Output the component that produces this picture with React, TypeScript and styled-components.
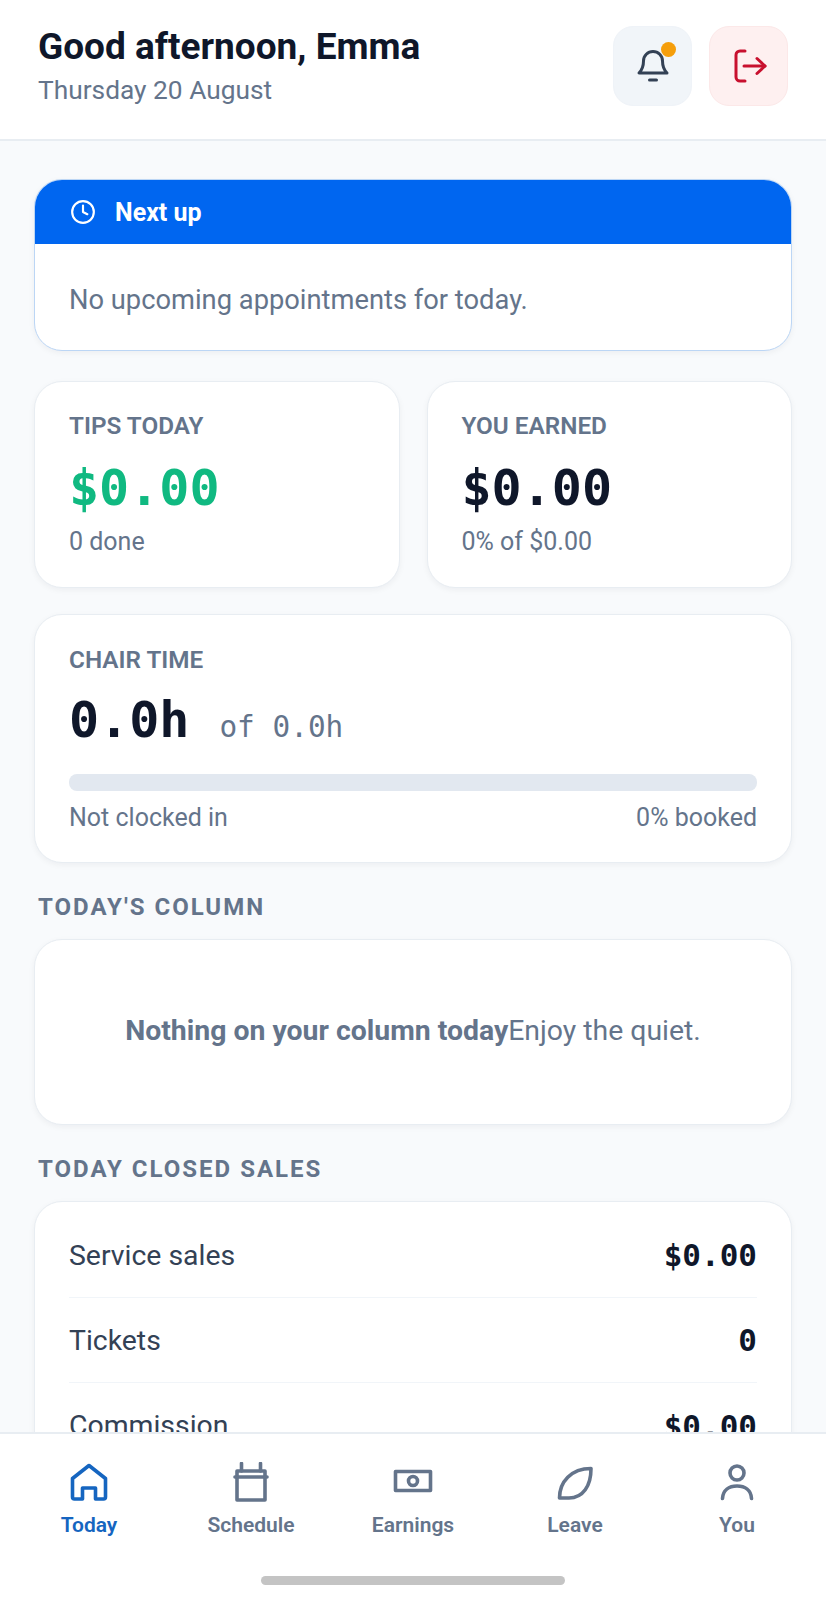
import React from 'react'
import styled, { createGlobalStyle } from 'styled-components'
import { Clock } from 'lucide-react'

const mono = `"DejaVu Sans Mono", "Liberation Mono", monospace`

const Global = createGlobalStyle`
  * { box-sizing: border-box; }
  html, body { margin: 0; padding: 0; }
  body { background: #f8fafc; font-family: Roboto, "Liberation Sans", sans-serif; }
`

const App = () => {
  return (
    <Screen>
      <Global />
      <Header>
        <div>
          <Title>Good afternoon, Emma</Title>
          <DateLine>Thursday 20 August</DateLine>
        </div>
        <HeadActions>
          <IconBtn>
            <HeadIcon viewBox="0 0 36 36" stroke="#334155">
              <path d="M4 25H32C29 22 27.5 19 27.5 13A9.5 9.5 0 0 0 8.5 13C8.5 19 7 22 4 25Z" />
              <path d="M14.5 32H21.5" />
            </HeadIcon>
            <Dot />
          </IconBtn>
          <IconBtn $danger>
            <HeadIcon viewBox="0 0 36 36" stroke="#c8102e">
              <path d="M14 3H9a4 4 0 0 0-4 4v22a4 4 0 0 0 4 4h5" />
              <path d="M13 18H34" />
              <path d="M26 10.5l8 7.5-8 7.5" />
            </HeadIcon>
          </IconBtn>
        </HeadActions>
      </Header>

      <Content>
        <NextCard>
          <NextHead>
            <Clock size={26} color="#fff" strokeWidth={2} />
            <span>Next up</span>
          </NextHead>
          <NextBody>No upcoming appointments for today.</NextBody>
        </NextCard>

        <TwoCols>
          <StatCard>
            <Label>TIPS TODAY</Label>
            <Money $green>$0.00</Money>
            <Small>0 done</Small>
          </StatCard>
          <StatCard>
            <Label>YOU EARNED</Label>
            <Money>$0.00</Money>
            <Small>0% of $0.00</Small>
          </StatCard>
        </TwoCols>

        <ChairCard>
          <Label>CHAIR TIME</Label>
          <HoursRow>
            <Hours>0.0h</Hours>
            <HoursOf>of 0.0h</HoursOf>
          </HoursRow>
          <Track />
          <TrackFoot>
            <span>Not clocked in</span>
            <span>0% booked</span>
          </TrackFoot>
        </ChairCard>

        <SectionTitle>TODAY'S COLUMN</SectionTitle>
        <EmptyCard>
          <strong>Nothing on your column today</strong>Enjoy the quiet.
        </EmptyCard>

        <SectionTitle>TODAY CLOSED SALES</SectionTitle>
        <SalesCard>
          <SalesRow><span>Service sales</span><SalesValue>$0.00</SalesValue></SalesRow>
          <SalesRow><span>Tickets</span><SalesValue>0</SalesValue></SalesRow>
          <SalesRow><span>Commission</span><SalesValue>$0.00</SalesValue></SalesRow>
        </SalesCard>
      </Content>

      <BottomNav>
        <NavItems>
          <NavItem $active>
            <NavIcon viewBox="0 0 40 40">
              <path d="M20 3.5L3.5 16.5V35a2 2 0 0 0 2 2H13.5V26H26.5V37H34.5a2 2 0 0 0 2-2V16.5Z" />
            </NavIcon>
            <span>Today</span>
          </NavItem>
          <NavItem>
            <NavIcon viewBox="0 0 40 40">
              <path d="M6 9H34V38H6Z" />
              <path d="M4 15H36" />
              <path d="M10.5 1.5V9M29.5 1.5V9" />
            </NavIcon>
            <span>Schedule</span>
          </NavItem>
          <NavItem>
            <NavIcon viewBox="0 0 40 40">
              <path d="M2.5 9.5H37.5V28.5H2.5Z" />
              <circle cx="20" cy="19" r="4.5" />
            </NavIcon>
            <span>Earnings</span>
          </NavItem>
          <NavItem>
            <NavIcon viewBox="0 0 40 40">
              <path d="M36 6.5C36 24 28 36 14 36H4.5C4.5 20 16 6.5 36 6.5Z" />
            </NavIcon>
            <span>Leave</span>
          </NavItem>
          <NavItem>
            <NavIcon viewBox="0 0 40 40">
              <circle cx="20" cy="11" r="7" />
              <path d="M5.5 36.5C6 28 12 24 20 24S34 28 34.5 36.5" />
            </NavIcon>
            <span>You</span>
          </NavItem>
        </NavItems>
        <HomeBar />
      </BottomNav>
    </Screen>
  )
}

export default App

const Screen = styled.div`
  width: 826px;
  height: 1600px;
  overflow: hidden;
  display: flex;
  flex-direction: column;
  background: #f8fafc;
`

const Header = styled.div`
  height: 141px;
  flex-shrink: 0;
  background: #fff;
  border-bottom: 2px solid #e8edf2;
  padding: 26px 38px 0 38px;
  display: flex;
  justify-content: space-between;
  align-items: flex-start;
`

const Title = styled.div`
  font-size: 37px;
  line-height: 42px;
  font-weight: 700;
  color: #0f172a;
`

const DateLine = styled.div`
  font-size: 26.3px;
  line-height: 32px;
  color: #64748b;
  margin-top: 6px;
`

const HeadActions = styled.div`
  display: flex;
  gap: 17px;
`

const IconBtn = styled.div<{ $danger?: boolean }>`
  position: relative;
  width: 79px;
  height: 80px;
  border-radius: 20px;
  display: flex;
  align-items: center;
  justify-content: center;
  background: ${p => (p.$danger ? '#fef0f0' : '#f1f5f9')};
  border: 1px solid ${p => (p.$danger ? '#fce8e8' : '#eff3f8')};
`

const HeadIcon = styled.svg`
  width: 36px;
  height: 36px;
  fill: none;
  stroke-width: 3;
  stroke-linecap: round;
  stroke-linejoin: round;
`

const Dot = styled.div`
  position: absolute;
  top: 15px;
  right: 15px;
  width: 15px;
  height: 15px;
  border-radius: 50%;
  background: #f59e0b;
`

const Content = styled.div`
  flex: 1;
  min-height: 0;
  overflow: hidden;
  padding: 38px 34px 0;
`

const Card = styled.div`
  background: #fff;
  border: 1px solid #e8edf2;
  border-radius: 28px;
  box-shadow: 0 2px 6px rgba(15, 23, 42, 0.05);
`

const NextCard = styled(Card)`
  height: 172px;
  overflow: hidden;
  border-color: #bcd6f5;
`

const NextHead = styled.div`
  height: 64px;
  background: #0066f0;
  color: #fff;
  display: flex;
  align-items: center;
  gap: 19px;
  padding-left: 35px;
  font-size: 25px;
  font-weight: 700;
`

const NextBody = styled.div`
  padding: 40px 0 0 34px;
  font-size: 27.3px;
  line-height: 32px;
  color: #64748b;
`

const TwoCols = styled.div`
  display: grid;
  grid-template-columns: 1fr 1fr;
  gap: 27px;
  margin-top: 30px;
`

const StatCard = styled(Card)`
  height: 207px;
  padding: 30px 34px 0;
`

const Label = styled.div`
  font-size: 24.3px;
  line-height: 28px;
  font-weight: 600;
  color: #64748b;
`

const Money = styled.div<{ $green?: boolean }>`
  font-family: ${mono};
  font-size: 50px;
  line-height: 60px;
  font-weight: 700;
  margin-top: 18px;
  color: ${p => (p.$green ? '#10b981' : '#0f172a')};
`

const Small = styled.div`
  font-size: 25px;
  line-height: 30px;
  color: #64748b;
  margin-top: 9px;
`

const ChairCard = styled(Card)`
  height: 249px;
  margin-top: 26px;
  padding: 31px 34px 0;
`

const HoursRow = styled.div`
  display: flex;
  align-items: baseline;
  gap: 30px;
  margin-top: 16px;
`

const Hours = styled.div`
  font-family: ${mono};
  font-size: 50px;
  line-height: 60px;
  font-weight: 700;
  color: #0f172a;
`

const HoursOf = styled.div`
  font-family: ${mono};
  font-size: 29.4px;
  color: #64748b;
`

const Track = styled.div`
  height: 17px;
  border-radius: 8px;
  background: #e2e8f0;
  margin-top: 24px;
`

const TrackFoot = styled.div`
  display: flex;
  justify-content: space-between;
  font-size: 25px;
  line-height: 30px;
  color: #64748b;
  margin-top: 12px;
`

const SectionTitle = styled.div`
  font-size: 24px;
  line-height: 28px;
  font-weight: 700;
  letter-spacing: 2px;
  color: #64748b;
  padding-left: 4px;
  margin-top: 30px;
`

const EmptyCard = styled(Card)`
  height: 186px;
  margin-top: 18px;
  padding-bottom: 3px;
  display: flex;
  align-items: center;
  justify-content: center;
  font-size: 28.4px;
  color: #64748b;

  strong {
    font-weight: 700;
  }
`

const SalesCard = styled(Card)`
  margin-top: 18px;
  padding: 11px 34px 0;
  height: 400px;
`

const SalesRow = styled.div`
  height: 85px;
  display: flex;
  align-items: center;
  justify-content: space-between;
  font-size: 28.4px;
  color: #334155;
  border-bottom: 1px solid #f1f5f9;

  &:last-child {
    border-bottom: none;
  }
`

const SalesValue = styled.span`
  font-family: ${mono};
  font-size: 31px;
  font-weight: 700;
  color: #0f172a;
`

const BottomNav = styled.div`
  height: 168px;
  flex-shrink: 0;
  background: #fff;
  border-top: 2px solid #e8edf2;
  display: flex;
  flex-direction: column;
  align-items: center;
`

const NavItems = styled.div`
  width: 100%;
  display: grid;
  grid-template-columns: repeat(5, 1fr);
  padding: 0 8px;
  margin-top: 28px;
`

const NavItem = styled.div<{ $active?: boolean }>`
  display: flex;
  flex-direction: column;
  align-items: center;
  gap: 10px;
  color: ${p => (p.$active ? '#1565c0' : '#64748b')};
  font-size: 21px;
  line-height: 26px;
  font-weight: 600;
`

const NavIcon = styled.svg`
  width: 40px;
  height: 40px;
  fill: none;
  stroke: currentColor;
  stroke-width: 3.6;
  stroke-linejoin: round;
  stroke-linecap: round;
`

const HomeBar = styled.div`
  width: 304px;
  height: 9px;
  border-radius: 5px;
  background: #c4c4c4;
  margin-top: 38px;
`
